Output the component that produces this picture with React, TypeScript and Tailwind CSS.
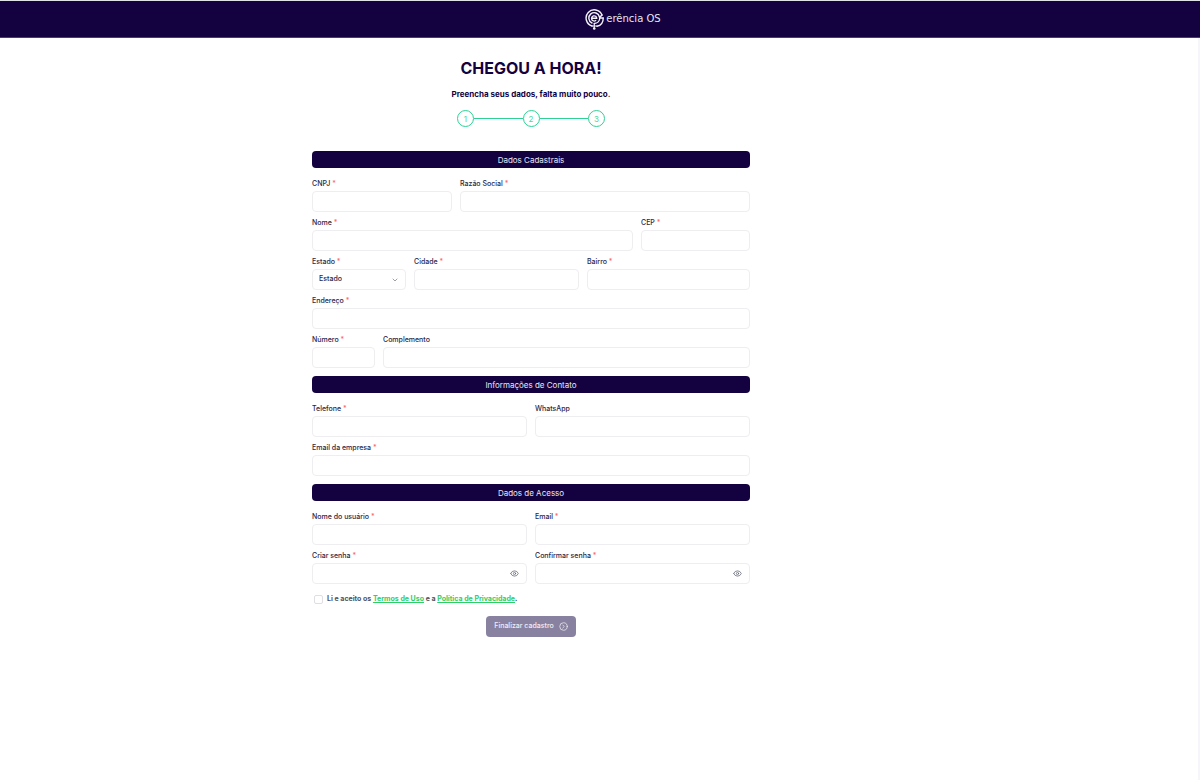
import { useState } from "react";
import type { InputHTMLAttributes, ReactNode } from "react";
import { ChevronDown, CircleChevronRight, Eye } from "lucide-react";

const control =
  "block h-[21px] w-full rounded-[4px] border border-[#eeeef0] bg-white px-1.5 text-[7px] text-[#2a2647] outline-none focus:border-[#a49cc4]";

function Label({ id, text, required }: { id: string; text: string; required?: boolean }) {
  return (
    <label htmlFor={id} className="mb-0.5 block h-3 text-[7px] leading-[13px] font-medium whitespace-nowrap text-[#2a2647]">
      {text}
      {required && <span className="text-[#ff6467]"> *</span>}
    </label>
  );
}

type FieldProps = InputHTMLAttributes<HTMLInputElement> & {
  id: string;
  label: string;
};

function Field({ id, label, required, ...rest }: FieldProps) {
  return (
    <div className="min-w-0">
      <Label id={id} text={label} required={required} />
      <input id={id} required={required} className={control} {...rest} />
    </div>
  );
}

function PasswordField({ id, label }: { id: string; label: string }) {
  const [visible, setVisible] = useState(false);
  return (
    <div className="min-w-0">
      <Label id={id} text={label} required />
      <div className="flex h-[21px] items-center rounded-[4px] border border-[#eeeef0] bg-white pr-[7px] focus-within:border-[#a49cc4]">
        <input
          id={id}
          type={visible ? "text" : "password"}
          required
          className="h-full min-w-0 flex-1 bg-transparent px-1.5 text-[7px] text-[#2a2647] outline-none"
        />
        <button type="button" aria-label="Mostrar senha" onClick={() => setVisible(!visible)} className="text-[#5f6675]">
          <Eye className="size-[9px]" strokeWidth={2} />
        </button>
      </div>
    </div>
  );
}

function Section({ title, children }: { title: string; children: ReactNode }) {
  return (
    <section>
      <h2 className="mb-[9px] h-[17px] rounded-[4px] bg-[#13023f] text-center text-[8px] leading-[18px] font-normal text-[#e9e6f1]">
        {title}
      </h2>
      <div className="flex flex-col gap-1">{children}</div>
    </section>
  );
}

function LogoMark() {
  return (
    <svg viewBox="0 0 40 44" className="h-[22px] w-5" fill="none" stroke="#f4f2fa" strokeLinecap="round" aria-hidden="true">
      <path d="M34 14A16.500 16.500 0 1 0 14 36" strokeWidth="2.800" />
      <path d="M29 18A10.800 10.800 0 1 0 14 30" strokeWidth="2.800" />
      <path d="M13.500 20.500H23.500A5.200 5.200 0 1 0 21.500 25" strokeWidth="2.600" />
      <path d="M34 14C32 17 30 17 29 18M30 20H36.500C36.500 28 32 35 24 36.500" strokeWidth="2.800" />
      <path d="M29.500 20C29.500 26 25 30.800 18.500 31" strokeWidth="2.800" />
      <path d="M14 36H24M18.500 31v8" strokeWidth="2.400" />
      <circle cx="18.500" cy="41" r="2.600" fill="#f4f2fa" stroke="none" />
    </svg>
  );
}

function Steps() {
  return (
    <ol className="mx-auto mt-[10px] flex w-[148px] items-center" aria-label="Etapas">
      {[1, 2, 3].map((n) => (
        <li key={n} className="flex items-center not-first:flex-1">
          {n > 1 && <span className="h-px flex-1 bg-[#2fd195]" />}
          <span className="flex size-[17px] items-center justify-center rounded-full border border-[#2fd195] text-[8px] leading-none text-[#4bd8a3]">
            {n}
          </span>
        </li>
      ))}
    </ol>
  );
}

export default function App() {
  const [accepted, setAccepted] = useState(false);
  return (
    <div className="flex min-h-screen flex-col border-t border-[#dfe3e6] bg-white font-['Inter',sans-serif] text-[#13023f]">
      <header className="flex h-[37px] items-center justify-center border-b border-[#4a3d6e] bg-[#13023f] pl-[46px]">
        <a href="#" aria-label="Gerência OS" className="flex items-center gap-px">
          <LogoMark />
          <span className="font-['DejaVu_Sans',sans-serif] text-[10px] leading-none text-[#e9e6f1]">erência OS</span>
        </a>
      </header>

      <main className="flex-1 border-r-2 border-[#f6f6fa] pr-[152px] pb-10 pl-4">
        <div className="mx-auto max-w-[438px]">
          <h1 className="mt-5 text-center text-[16px] leading-5 font-bold">CHEGOU A HORA!</h1>
          <p className="mt-[10px] text-center text-[8px] leading-3 font-bold">Preencha seus dados, falta muito pouco.</p>
          <Steps />

          <form className="mt-6 flex flex-col gap-2" onSubmit={(e) => e.preventDefault()}>
            <Section title="Dados Cadastrais">
              <div className="grid grid-cols-[140fr_290fr] gap-2">
                <Field id="cnpj" label="CNPJ" required />
                <Field id="razao" label="Razão Social" required />
              </div>
              <div className="grid grid-cols-[321fr_109fr] gap-2">
                <Field id="nome" label="Nome" required />
                <Field id="cep" label="CEP" required />
              </div>
              <div className="grid grid-cols-[94fr_165fr_163fr] gap-2">
                <div className="min-w-0">
                  <Label id="estado" text="Estado" required />
                  <div className="grid items-center">
                    <select id="estado" className={`${control} col-start-1 row-start-1 appearance-none font-medium`}>
                      <option>Estado</option>
                      <option>Minas Gerais</option>
                      <option>Rio de Janeiro</option>
                      <option>São Paulo</option>
                    </select>
                    <ChevronDown className="pointer-events-none col-start-1 row-start-1 mr-[7px] size-2 justify-self-end text-[#6b7080]" />
                  </div>
                </div>
                <Field id="cidade" label="Cidade" required />
                <Field id="bairro" label="Bairro" required />
              </div>
              <Field id="endereco" label="Endereço" required />
              <div className="grid grid-cols-[63fr_367fr] gap-2">
                <Field id="numero" label="Número" required />
                <Field id="complemento" label="Complemento" />
              </div>
            </Section>

            <Section title="Informações de Contato">
              <div className="grid grid-cols-2 gap-2">
                <Field id="telefone" label="Telefone" type="tel" required />
                <Field id="whatsapp" label="WhatsApp" type="tel" />
              </div>
              <Field id="email-empresa" label="Email da empresa" type="email" required />
            </Section>

            <Section title="Dados de Acesso">
              <div className="grid grid-cols-2 gap-2">
                <Field id="usuario" label="Nome do usuário" required />
                <Field id="email" label="Email" type="email" required />
              </div>
              <div className="grid grid-cols-2 gap-2">
                <PasswordField id="senha" label="Criar senha" />
                <PasswordField id="confirmar" label="Confirmar senha" />
              </div>
            </Section>

            <div className="flex items-center gap-1 pt-px pl-0.5">
              <input
                id="termos"
                type="checkbox"
                checked={accepted}
                onChange={(e) => setAccepted(e.target.checked)}
                className="size-[9px] appearance-none rounded-[2px] border border-[#dedee3] bg-white checked:bg-[#13023f]"
              />
              <label htmlFor="termos" className="text-[7px] leading-3 font-bold text-[#4f5262]">
                Li e aceito os <a href="#termos-de-uso" className="text-[#2fce68] underline">Termos de Uso</a> e a{" "}
                <a href="#privacidade" className="text-[#2fce68] underline">Política de Privacidade</a>.
              </label>
            </div>

            <button
              type="submit"
              disabled={!accepted}
              className="mt-[3px] flex h-[21px] items-center gap-[5px] self-center rounded-[4px] bg-[#13023f] px-2 text-[7px] font-medium text-white disabled:bg-[#8981a0] disabled:text-[#f0eef5]"
            >
              Finalizar cadastro
              <CircleChevronRight className="size-[9px]" />
            </button>
          </form>
        </div>
      </main>
    </div>
  );
}
